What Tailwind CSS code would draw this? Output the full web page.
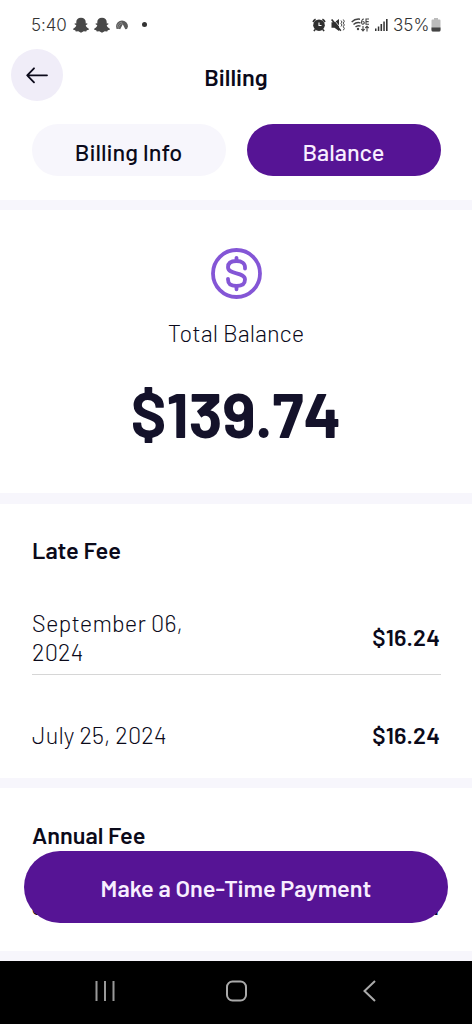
<!DOCTYPE html>
<html lang="en">
<head>
<meta charset="utf-8">
<title>Billing</title>
<script src="https://cdn.jsdelivr.net/npm/@tailwindcss/browser@4"></script>
</head>
<body class="bg-white">
<div class="relative flex h-[1024px] w-[472px] flex-col overflow-hidden bg-white font-['Barlow','Roboto',sans-serif] text-[23.5px] leading-[28px] text-[#0b0a1a]">

  <!-- Status bar -->
  <div class="flex h-12 shrink-0 items-center justify-between pt-px pr-[31px] pl-[31px] font-['Inter',sans-serif] text-[17px] leading-[20px] font-light text-[#333]">
    <div class="flex items-center">
      <span class="w-[42px] tracking-[-0.1px]">5:40</span>
      <svg class="h-4 w-4" viewBox="0 0 16 16" fill="#484848"><path d="M8 .8C5 .8 3.300 2.600 3.300 5v1.500L1.800 6.200 1.600 7.300 3.300 8.300c-.5 1.700-1.500 2.800-3.100 3.400v1.100l2 .5.6 1.200 2.500-.2L8 15.700l2.700-1.400 2.500.2.600-1.200 2-.5v-1.100C14.200 11.100 13.200 10 12.700 8.300l1.700-1-.2-1.100-1.500.3V5C12.700 2.600 11 .8 8 .8z"/></svg>
      <svg class="ml-[5px] h-4 w-4" viewBox="0 0 16 16" fill="#484848"><path d="M8 .8C5 .8 3.300 2.600 3.300 5v1.500L1.800 6.200 1.600 7.300 3.300 8.300c-.5 1.700-1.500 2.800-3.100 3.400v1.100l2 .5.6 1.200 2.500-.2L8 15.700l2.700-1.400 2.500.2.600-1.200 2-.5v-1.100C14.200 11.100 13.200 10 12.700 8.300l1.700-1-.2-1.100-1.500.3V5C12.700 2.600 11 .8 8 .8z"/></svg>
      <svg class="ml-[6px] h-3 w-3" viewBox="0 0 12 12"><path d="M0 7.500a6 6 0 0 1 12 0L11 10 9.300 10.200 6.800 5.200 4.200 10.200 2.500 9.800.6 10z" fill="#5b5b5b"/><path d="M1.200 8.500A5 5 0 0 1 6 3.200M2.800 9.200A4 4 0 0 1 6.500 4.600" stroke="#ccc" stroke-width=".4" fill="none"/></svg>
      <span class="ml-[14px] h-[5px] w-[5px] rounded-full bg-[#333]"></span>
    </div>
    <div class="flex items-center">
      <svg class="h-[14px] w-[14px]" viewBox="0 0 14 14" fill="none"><circle cx="7" cy="7.200" r="5.800" fill="#303030"/><path d="M1 4a7 7 0 0 1 2.600-2.700M13 4a7 7 0 0 0-2.600-2.700M3 11.500l-1 1.700M11 11.500l1 1.700" stroke="#303030" stroke-width="1.600"/><path d="M7 4.600v2.900h2.500" stroke="#fff" stroke-width="1.100"/></svg>
      <svg class="ml-[5px] h-[14px] w-[14px]" viewBox="0 0 14 14" fill="none"><path d="M.5 4.200h3L8 1v12L3.500 9.800h-3z" fill="#303030"/><path d="M2.300 1l7 8.500" stroke="#fff" stroke-width=".8"/><path d="M.6 1.400l9.200 11.400" stroke="#303030" stroke-width="1.600"/><path d="M10 2.500l1 1.500-1 1.500 1 1.500-1 1.500M12.300 1.500l1 1.800-1 1.800 1 1.800-1 1.800 1 1.800-1 1.800" stroke="#444" stroke-width="1"/></svg>
      <svg class="ml-[6px] h-4 w-[19px]" viewBox="0 0 19 16" fill="none" stroke="#444" stroke-width="1.400"><path d="M.7 5A9.500 9.500 0 0 1 9 2.200M2.500 7.500a7 7 0 0 1 7-1.700M4.500 10a4.500 4.500 0 0 1 5-.8"/><circle cx="7" cy="12" r="1.200" fill="#444" stroke="none"/><path d="M12.800 2.200c-2.500-.5-3 5-1 5s2-3-.2-2.600M18 2h-3v5.300h3M15 4.600h2.700M12 9v5m-1.700-2L12 14l1.700-2M16 14.500V9.300M14.300 11L16 9.200l1.700 1.800" stroke-width="1.100"/></svg>
      <svg class="ml-[5px] h-[14px] w-[13px]" viewBox="0 0 13 14" fill="#333"><path d="M0 10.500h1.500V13H0zM2.800 8.500h1.500V13H2.800zM5.500 6h1.600v7H5.500zM8.300 3.500h1.500V13H8.300zM11 1h1.600v12H11z"/></svg>
      <span class="ml-[5px] w-[37px]">35%</span>
      <svg class="ml-[1px] h-[14px] w-[10px]" viewBox="0 0 10 14"><path d="M3 0h4v1.500h1.500q1 0 1 1V12q0 1.500-1.500 1.500H2Q.5 13.500.5 12V2.500q0-1 1-1H3z" fill="#bbb"/><path d="M.5 9.500h9V12q0 1.500-1.500 1.500H2Q.5 13.500.5 12z" fill="#444"/></svg>
    </div>
  </div>

  <!-- Title bar -->
  <header class="grid h-[54px] shrink-0 grid-cols-[1fr_auto_1fr] items-center px-[10.5px]">
    <button class="flex h-[52px] w-[52px] items-center justify-center rounded-full bg-[#f0edf8]">
      <svg class="h-5 w-[22px]" viewBox="0 0 22 20" fill="none" stroke="#0b0a1a" stroke-width="1.800" stroke-linecap="round" stroke-linejoin="round"><path d="M21 10.300H1.200M8 3.300L1.200 10.300 8 17.300"/></svg>
    </button>
    <h1 class="pt-[3px] font-semibold">Billing</h1>
    <span></span>
  </header>

  <!-- Tabs -->
  <div class="grid h-[98px] shrink-0 grid-cols-2 gap-[21px] px-[31.5px] pt-[22px]">
    <button class="flex h-[52px] items-center justify-center rounded-full bg-[#f7f6fc] pt-[3px] font-medium">Billing Info</button>
    <button class="flex h-[52px] items-center justify-center rounded-full bg-[#561495] pt-[3px] font-medium text-[#f8eeff]">Balance</button>
  </div>

  <div class="h-[10px] shrink-0 bg-[#f7f6fc]"></div>

  <!-- Total balance -->
  <section class="flex h-[283px] shrink-0 flex-col items-center pt-[38px]">
    <svg class="h-[51px] w-[51px]" viewBox="0 0 51 51" fill="none" stroke="#8456d6" stroke-width="3.800" stroke-linecap="round"><circle cx="25.500" cy="25.500" r="23.500"/><path d="M34 20.500v-1.200c0-4-3-6.300-8.500-6.300S17 15.300 17 19.200c0 8 17 4.300 17 12.300 0 4-3 6.500-8.500 6.500S17 35.500 17 31.500v-.7M25.500 9.800V13M25.500 38v3.300"/></svg>
    <p class="mt-5 font-light tracking-[0.1px]">Total Balance</p>
    <p class="mt-[30px] text-[62.5px] leading-[72px] font-bold text-[#14122a]">$139.74</p>
  </section>

  <div class="h-[11px] shrink-0 bg-[#f7f6fc]"></div>

  <!-- Late fee -->
  <section class="flex h-[274px] shrink-0 flex-col px-8 pt-[32px]">
    <h2 class="font-semibold">Late Fee</h2>
    <div class="-mr-px mt-[45px] flex items-center justify-between border-b border-[#d6d6d6] pb-2">
      <p class="w-[170px] leading-[28.5px] font-light tracking-[0.2px]">September 06, 2024</p>
      <p class="pr-px pb-[2px] font-semibold tracking-[0.1px]">$16.24</p>
    </div>
    <div class="mt-[46px] flex items-center justify-between">
      <p class="font-light tracking-[0.15px]">July 25, 2024</p>
      <p class="font-semibold tracking-[0.1px]">$16.24</p>
    </div>
  </section>

  <div class="h-[10px] shrink-0 bg-[#f7f6fc]"></div>

  <!-- Annual fee -->
  <section class="flex h-[163px] shrink-0 flex-col px-8 pt-[33px]">
    <h2 class="font-semibold">Annual Fee</h2>
    <div class="mt-[43px] flex items-center justify-between">
      <p class="font-light tracking-[0.15px]">July 25, 2024</p>
      <p class="font-semibold tracking-[0.1px]">$16.24</p>
    </div>
  </section>

  <div class="h-[10px] shrink-0 bg-[#f7f6fc]"></div>

  <!-- System navigation -->
  <nav class="flex h-[63px] shrink-0 items-center justify-between bg-black px-[94px] pb-[3px]">
    <svg class="h-[22px] w-[22px]" viewBox="0 0 22 22" stroke="#999" stroke-width="2"><path d="M2.500 1v20M11 1v20M19.500 1v20"/></svg>
    <svg class="h-[22px] w-[22px]" viewBox="0 0 22 22" fill="none" stroke="#aaa" stroke-width="2"><rect x="2" y="1.500" width="19" height="19" rx="5.500"/></svg>
    <svg class="h-[22px] w-[22px]" viewBox="0 0 22 22" fill="none" stroke="#aaa" stroke-width="2"><path d="M19 1L8.500 11 19 21"/></svg>
  </nav>

  <button class="absolute top-[851px] left-[24px] flex h-[72px] w-[424px] items-center justify-center rounded-full bg-[#561495] pt-[2px] font-semibold text-[#f8eeff]">Make a One-Time Payment</button>
</div>
</body>
</html>
